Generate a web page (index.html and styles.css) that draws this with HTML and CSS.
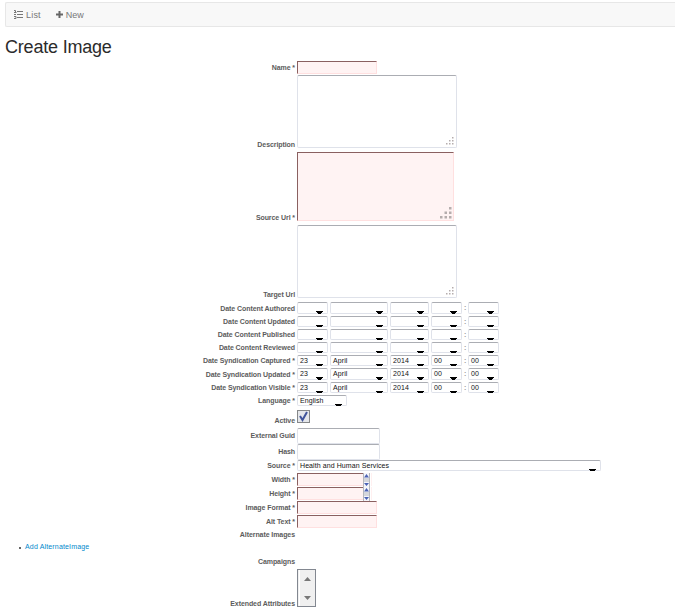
FILE: index.html
```html
<!DOCTYPE html>
<html lang="en">
<head>
<meta charset="utf-8">
<title>Create Image</title>
<link rel="stylesheet" href="styles.css">
</head>
<body>
<nav class="toolbar">
  <a class="nav-link list-link"><svg width="9" height="9" viewBox="0 0 9 9"><path d="M3 1.5h6M3 4.5h6M3 7.5h6M0 .5h1.5v2M0 2.5h2.5M0 4.5h2M0 6.5h2v2H0" fill="none" stroke="#777"/></svg>List</a>
  <a class="nav-link"><svg width="7" height="7" viewBox="0 0 7 7"><path d="M3.5 0v7M0 3.5h7" stroke="#666" stroke-width="2"/></svg>New</a>
</nav>
<h1>Create Image</h1>
<form id="form"></form>
<script src="form.js"></script>
</body>
</html>
```
FILE: styles.css
```css
* { box-sizing: border-box; }
body { margin: 0; width: 675px; height: 608px; overflow: hidden; background: #fff; font-family: "Liberation Sans", Arial, sans-serif; color: #333; }
.toolbar { display: flex; align-items: center; gap: 15px; height: 25px; margin: 2px 0 0 5px; padding-left: 8px; border: 1px solid #e7e7e7; border-right: 0; border-radius: 2px 0 0 2px; background: #f8f8f8; }
.nav-link { display: flex; align-items: center; gap: 3px; font-size: 9px; line-height: 12px; color: #777; }
.list-link { letter-spacing: 0.2px; }
h1 { margin: 9px 0 0 5px; height: 25px; font-size: 18px; line-height: 22px; font-weight: 400; letter-spacing: -0.2px; color: #2b2b2b; }
.row { display: flex; gap: 2px; align-items: flex-start; }
.label { width: 295px; flex: none; text-align: right; font-size: 7px; line-height: 12px; font-weight: 700; letter-spacing: -0.08px; color: #5c5c5c; white-space: nowrap; }
.controls { display: flex; align-items: flex-start; gap: 2px; }
.input, .area, .select { border: 1px solid #dfe2ea; border-top-color: #abadb3; border-radius: 2px; background: #fff; }
.input { width: 83px; height: 16px; }
.area { width: 160px; height: 73px; display: flex; justify-content: flex-end; align-items: flex-end; padding: 2px; }
.required { border: 1px solid #ffe0e0; border-top-color: #8a6060; border-left-color: #8a6060; border-radius: 0; background: #fff3f3; }
.input.required { width: 80px; height: 13px; }
.area.required { width: 157px; height: 69px; padding: 1px; }
.select { display: flex; justify-content: space-between; align-items: flex-start; height: 12px; padding: 0 4px 0 2px; font-size: 7px; line-height: 10px; letter-spacing: 0.08px; color: #111; white-space: nowrap; }
.arrow { flex: none; width: 7px; height: 3px; margin-top: 8px; background: #000; clip-path: polygon(0 0, 100% 0, 100% 34%, 86% 34%, 86% 67%, 72% 67%, 72% 100%, 28% 100%, 28% 67%, 14% 67%, 14% 34%, 0 34%); }
.short { height: 11px; }
.short .arrow { height: 2px; clip-path: polygon(0 0, 100% 0, 100% 50%, 86% 50%, 86% 100%, 14% 100%, 14% 50%, 0 50%); }
.day, .time { width: 31px; }
.month { width: 58px; }
.year { width: 39px; }
.language { width: 50px; }
.source { width: 304px; }
.colon { width: 2px; font-size: 7px; line-height: 12px; font-weight: 700; color: #999; }
.checkbox { display: flex; width: 13px; height: 13px; border: 1px solid #858789; background: #e5e7eb; }
.number { display: flex; }
.number .input.required { width: 66px; border-right: 0; }
.number::after { content: ""; width: 1px; height: 13px; margin-left: 1px; background: #fff0f0; }
.scrollbox { display: block; width: 19px; height: 38px; border: 1px solid #828790; background: #f0f0f0; }
.links { margin: 0; padding: 0 0 0 25px; list-style: none; font-size: 7px; line-height: 12px; letter-spacing: 0.16px; color: #0088cc; }
.links li { display: flex; align-items: center; }
.links li::before { content: ""; width: 2px; height: 2px; margin: 1px 4px 0 -6px; border-radius: 1px; background: #333; }
```
FILE: form.js
```js
const grip = big => {
  const s = big ? 2.5 : 1.5, p = big ? 4.5 : 3;
  let dots = '';
  [[2,0],[1,1],[2,1],[0,2],[1,2],[2,2]].forEach(([x,y]) => {
    dots += `<rect x="${x*p}" y="${y*p}" width="${s}" height="${s}"/>`;
  });
  const size = big ? 12 : 8;
  return `<svg width="${size}" height="${size}" fill="#b5adad">${dots}</svg>`;
};
const select = (cls, text = '') => `<span class="select ${cls}"><span>${text}</span><i class="arrow"></i></span>`;
const date = (values, cls) => {
  const [d = '', m = '', y = '', h = '', n = ''] = values;
  return select('day ' + cls, d) + select('month ' + cls, m) + select('year ' + cls, y) + select('time ' + cls, h) + '<span class="colon">:</span>' + select('time ' + cls, n);
};
const input = '<span class="input"></span>';
const required = '<span class="input required"></span>';
const number = `<span class="number">${required}<svg width="7" height="14" viewBox="0 0 7 14"><path fill="#f4f5fa" d="M0 0h7v14H0z"/><path d="M.5 0v14M6.500 0v14" stroke="#b4b7bd"/><path d="M1 6h5M1 8h5" stroke="#b4b7bd"/><path d="M1 4.500l2.500-3.500L6 4.500zM1 10h5l-2.500 3z" fill="#4b62b5"/></svg></span>`;
const check = '<span class="checkbox"><svg width="11" height="11"><path d="M2 5l2.500 4L9 1" fill="none" stroke="#40549b" stroke-width="2"/></svg></span>';
const scroll = '<svg class="scrollbox" viewBox="0 0 17 36"><path d="M1.500 0v36" stroke="#fff"/><path d="M6 11l3.500-4 3.500 4zM6 26h7l-3.500 4z" fill="#777"/></svg>';
const now = ['23', 'April', '2014', '00', '00'];
// label, controls, row height, label offset, control offset
const rows = [
  ['Name *', required, 14, 1, 0],
  ['Description', `<span class="area">${grip(false)}</span>`, 77, 64, 0],
  ['Source Url *', `<span class="area required">${grip(true)}</span>`, 73, 60, 0],
  ['Target Url', `<span class="area">${grip(false)}</span>`, 77, 64, 0],
  ['Date Content Authored', date([], ''), 14, 1, 0],
  ['Date Content Updated', date([], 'short'), 13, 0, 0],
  ['Date Content Published', date([], 'short'), 13, 0, 0],
  ['Date Content Reviewed', date([], 'short'), 13, 0, 0],
  ['Date Syndication Captured *', date(now, 'short'), 13, 0, 0],
  ['Date Syndication Updated *', date(now, ''), 14, 1, 0],
  ['Date Syndication Visible *', date(now, 'short'), 13, 0, 0],
  ['Language *', select('language short', 'English'), 15, 0, 0],
  ['Active', check, 18, 5, 0],
  ['External Guid', input, 16, 2, 0],
  ['Hash', input, 16, 2, 0],
  ['Source *', select('source short', 'Health and Human Services'), 12, 0, 0],
  ['Width *', number, 15, 2, 1],
  ['Height *', number, 14, 1, 0],
  ['Image Format *', required, 14, 1, 0],
  ['Alt Text *', required, 14, 1, 0],
  ['Alternate Images', '', 12, 0, 0],
  null,
  ['Campaigns', '', 13, 0, 0],
  ['Extended Attributes', scroll, 39, 29, 0]
];
document.getElementById('form').innerHTML = rows.map(r => r
  ? `<div class="row" style="height:${r[2]}px"><span class="label" style="margin-top:${r[3]}px">${r[0]}</span><div class="controls" style="margin-top:${r[4]}px">${r[1]}</div></div>`
  : '<ul class="links" style="height:15px"><li>Add AlternateImage</li></ul>').join('');
```
